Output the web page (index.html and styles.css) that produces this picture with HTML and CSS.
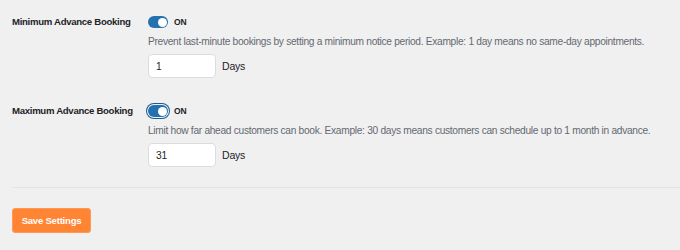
FILE: index.html
```html
<!DOCTYPE html>
<html lang="en">
<head>
<meta charset="utf-8">
<link rel="stylesheet" href="styles.css">
</head>
<body>
<div class="page">
  <div class="field">
    <div class="label">Minimum Advance Booking</div>
    <div class="control">
      <div class="toggle-row">
        <span class="toggle"><span class="knob"></span></span>
        <span class="state">ON</span>
      </div>
      <p class="desc">Prevent last-minute bookings by setting a minimum notice period. Example: 1 day means no same-day appointments.</p>
      <div class="input-row">
        <input class="num" type="text" value="1">
        <span class="unit">Days</span>
      </div>
    </div>
  </div>
  <div class="field second">
    <div class="label">Maximum Advance Booking</div>
    <div class="control">
      <div class="toggle-row">
        <span class="toggle focused"><span class="knob"></span></span>
        <span class="state">ON</span>
      </div>
      <p class="desc">Limit how far ahead customers can book. Example: 30 days means customers can schedule up to 1 month in advance.</p>
      <div class="input-row">
        <input class="num" type="text" value="31">
        <span class="unit">Days</span>
      </div>
    </div>
  </div>
  <hr class="divider">
  <button class="save" type="button">Save Settings</button>
</div>
</body>
</html>
```
FILE: styles.css
```css
html, body {
  margin: 0;
  padding: 0;
  background: #f0f0f1;
}
body {
  font-family: "Liberation Sans", Arial, sans-serif;
  font-size: 10.2px;
  letter-spacing: -0.3px;
  color: #1d2327;
}
.page {
  padding: 12px 0 0 12px;
}
.field {
  display: grid;
  grid-template-columns: 136px 1fr;
}
.field.second {
  margin-top: 23px;
}
.label {
  font-weight: 700;
  font-size: 9.6px;
  letter-spacing: -0.3px;
  line-height: 20px;
  white-space: nowrap;
  color: #1d2327;
}
.toggle-row {
  height: 20px;
  display: flex;
  align-items: center;
  gap: 6px;
}
.toggle {
  width: 20px;
  height: 12px;
  border-radius: 6px;
  background: #2271b1;
  display: flex;
  align-items: center;
  justify-content: flex-end;
  padding: 0 1.5px;
  box-sizing: border-box;
}
.toggle.focused {
  box-shadow: 0 0 0 1px #f0f0f1, 0 0 0 2px #1b5b8f;
}
.knob {
  width: 9px;
  height: 9px;
  border-radius: 50%;
  background: #fff;
}
.state {
  font-size: 8.5px;
  font-weight: 700;
  letter-spacing: 0;
}
.desc {
  margin: 0;
  line-height: 20px;
  color: #646970;
  white-space: nowrap;
}
.input-row {
  margin-top: 2px;
  display: flex;
  align-items: center;
  gap: 6px;
}
.num {
  width: 68px;
  height: 24px;
  box-sizing: border-box;
  border: 1px solid #dcdcde;
  border-radius: 4px;
  background: #fff;
  padding: 0 7px;
  font-family: inherit;
  font-size: 10.2px;
  letter-spacing: -0.2px;
  color: #1d2327;
  margin: 0;
}
.unit {
  font-size: 10.5px;
  letter-spacing: -0.2px;
}
.divider {
  margin: 20px 0 0 0;
  border: 0;
  border-top: 1px solid #e4e4e6;
  height: 0;
}
.save {
  margin-top: 20px;
  height: 25px;
  width: 79px;
  padding: 0;
  background: #ff8534;
  border: 1px solid #ff9a55;
  border-radius: 3px;
  color: #fff;
  font-family: inherit;
  font-size: 9.5px;
  font-weight: 700;
  letter-spacing: -0.2px;
}
```
